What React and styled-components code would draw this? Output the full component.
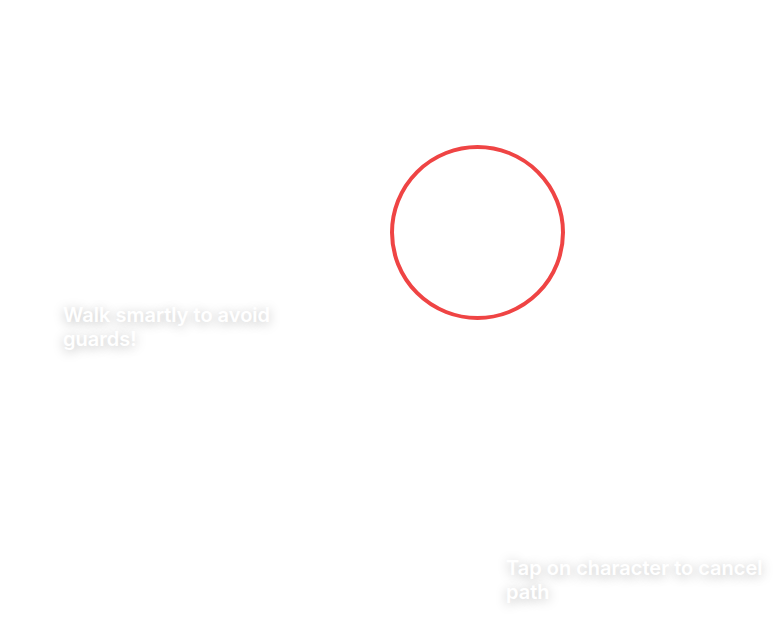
import React from 'react'
import styled, { createGlobalStyle } from 'styled-components'

const GlobalStyle = createGlobalStyle`
    html, body {
        margin: 0;
        padding: 0;
        background: #fff;
    }
    body {
        font-family: Inter, "Noto Sans", sans-serif;
    }
`

const Stage = styled.div`
    position: relative;
    width: 782px;
    height: 620px;
    overflow: hidden;
    background: #fff;
`

const Target = styled.div`
    position: absolute;
    left: ${p => p.x}px;
    top: ${p => p.y}px;
    width: ${p => p.size}px;
    height: ${p => p.size}px;
    box-sizing: border-box;
    border: 4px solid #ef4444;
    border-radius: 50%;
`

const Hint = styled.div`
    position: absolute;
    left: ${p => p.x}px;
    top: ${p => p.y}px;
    width: ${p => p.w}px;
    color: #fff;
    font-size: 20px;
    font-weight: 600;
    line-height: 24px;
    text-shadow: 0 2px 12px rgba(0, 0, 0, 0.28);
`

export default function App() {
    return (
        <>
            <GlobalStyle />
            <Stage>
                <Target x={390} y={145} size={175} />
                <Hint x={63} y={303} w={240}>Walk smartly to avoid guards!</Hint>
                <Hint x={506} y={556} w={270}>Tap on character to cancel path</Hint>
            </Stage>
        </>
    )
}
